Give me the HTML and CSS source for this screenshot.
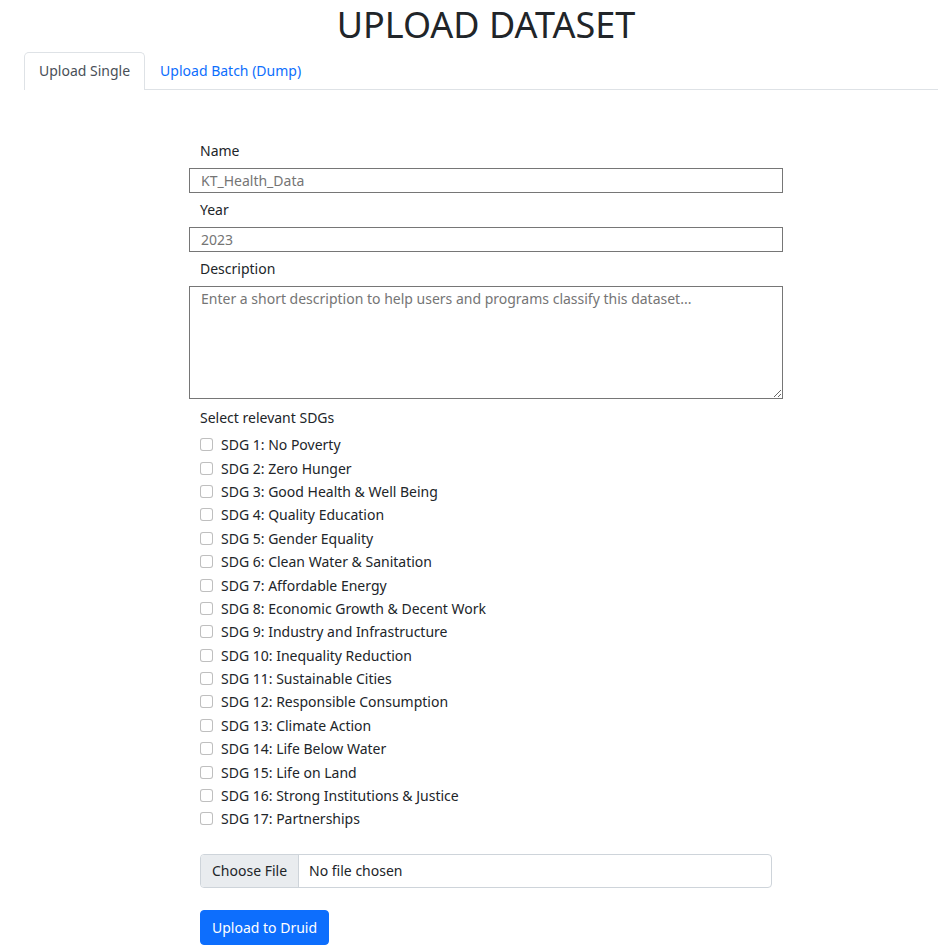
FILE: index.html
```html
<!DOCTYPE html>
<html>
<head>
<meta charset="utf-8">
<link rel="stylesheet" href="styles.css">
</head>
<body>
<h1 class="title">UPLOAD DATASET</h1>
<ul class="tabs">
  <li class="tab active">Upload Single</li>
  <li class="tab">Upload Batch (Dump)</li>
</ul>
<form class="form">
  <label class="label">Name</label>
  <input class="field" type="text" placeholder="KT_Health_Data">
  <label class="label">Year</label>
  <input class="field" type="text" placeholder="2023">
  <label class="label">Description</label>
  <textarea class="field area" placeholder="Enter a short description to help users and programs classify this dataset..."></textarea>
  <label class="label sdg-label">Select relevant SDGs</label>
  <div class="checks">
    <label class="check"><input type="checkbox" class="box"><span>SDG 1: No Poverty</span></label>
    <label class="check"><input type="checkbox" class="box"><span>SDG 2: Zero Hunger</span></label>
    <label class="check"><input type="checkbox" class="box"><span>SDG 3: Good Health &amp; Well Being</span></label>
    <label class="check"><input type="checkbox" class="box"><span>SDG 4: Quality Education</span></label>
    <label class="check"><input type="checkbox" class="box"><span>SDG 5: Gender Equality</span></label>
    <label class="check"><input type="checkbox" class="box"><span>SDG 6: Clean Water &amp; Sanitation</span></label>
    <label class="check"><input type="checkbox" class="box"><span>SDG 7: Affordable Energy</span></label>
    <label class="check"><input type="checkbox" class="box"><span>SDG 8: Economic Growth &amp; Decent Work</span></label>
    <label class="check"><input type="checkbox" class="box"><span>SDG 9: Industry and Infrastructure</span></label>
    <label class="check"><input type="checkbox" class="box"><span>SDG 10: Inequality Reduction</span></label>
    <label class="check"><input type="checkbox" class="box"><span>SDG 11: Sustainable Cities</span></label>
    <label class="check"><input type="checkbox" class="box"><span>SDG 12: Responsible Consumption</span></label>
    <label class="check"><input type="checkbox" class="box"><span>SDG 13: Climate Action</span></label>
    <label class="check"><input type="checkbox" class="box"><span>SDG 14: Life Below Water</span></label>
    <label class="check"><input type="checkbox" class="box"><span>SDG 15: Life on Land</span></label>
    <label class="check"><input type="checkbox" class="box"><span>SDG 16: Strong Institutions &amp; Justice</span></label>
    <label class="check"><input type="checkbox" class="box"><span>SDG 17: Partnerships</span></label>
  </div>
  <div class="file">
    <span class="file-btn">Choose File</span>
    <span class="file-name">No file chosen</span>
  </div>
  <button type="button" class="submit">Upload to Druid</button>
</form>
</body>
</html>
```
FILE: styles.css
```css
html, body {
  margin: 0;
  padding: 0;
  background: #fff;
  overflow-x: hidden;
}
body {
  font-family: "Noto Sans", "Open Sans", sans-serif;
  font-size: 14px;
  color: #212529;
}
.title {
  margin: 0;
  padding: 3px 0 0 34px;
  height: 49px;
  text-align: center;
  font-weight: 400;
  font-size: 36px;
  line-height: 44px;
  color: #212529;
}
.tabs {
  list-style: none;
  margin: 0 0 0 24px;
  padding: 0;
  display: flex;
  border-bottom: 1px solid #dee2e6;
  height: 37px;
}
.tab {
  padding: 0 14px;
  line-height: 35px;
  color: #0d6efd;
  border: 1px solid transparent;
  border-bottom: none;
  border-radius: 5px 5px 0 0;
  margin-bottom: -1px;
  height: 37px;
}
.tab.active {
  color: #495057;
  border-color: #dee2e6;
  background: #fff;
}
.form {
  margin: 0 0 0 200px;
  width: 572px;
  padding-top: 49px;
  display: flex;
  flex-direction: column;
}
.label {
  display: block;
  height: 24px;
  line-height: 24px;
  margin-bottom: 5px;
}
.field {
  display: block;
  margin: 0 -11px 5px -11px;
  width: 594px;
  height: 25px;
  box-sizing: border-box;
  border: 1px solid #767676;
  border-radius: 0;
  padding: 0 11px;
  font: inherit;
  font-size: 14px;
  color: #212529;
}
.field::placeholder {
  color: #757575;
}
.area {
  height: 113px;
  padding: 2px 11px;
  resize: vertical;
  margin-bottom: 7px;
}
.sdg-label {
  margin-bottom: 3px;
}
.checks {
  display: flex;
  flex-direction: column;
}
.check {
  display: flex;
  align-items: center;
  gap: 8px;
  height: 23.4px;
}
.box {
  appearance: none;
  -webkit-appearance: none;
  margin: 0;
  width: 13px;
  height: 13px;
  border: 1px solid rgba(0,0,0,0.25);
  border-radius: 3px;
  background: #fff;
  flex: none;
}
.file {
  margin-top: 23px;
  height: 34px;
  box-sizing: border-box;
  border: 1px solid #ced4da;
  border-radius: 4px;
  display: flex;
  align-items: stretch;
  overflow: hidden;
}
.file-btn {
  background: #e9ecef;
  border-right: 1px solid #ced4da;
  padding: 0 11px;
  display: flex;
  align-items: center;
}
.file-name {
  padding: 0 10px;
  display: flex;
  align-items: center;
}
.submit {
  margin-top: 22px;
  align-self: flex-start;
  height: 35px;
  padding: 0 11px;
  background: #0d6efd;
  color: #fff;
  border: 1px solid #0d6efd;
  border-radius: 4px;
  font: inherit;
  font-size: 14px;
}
```
